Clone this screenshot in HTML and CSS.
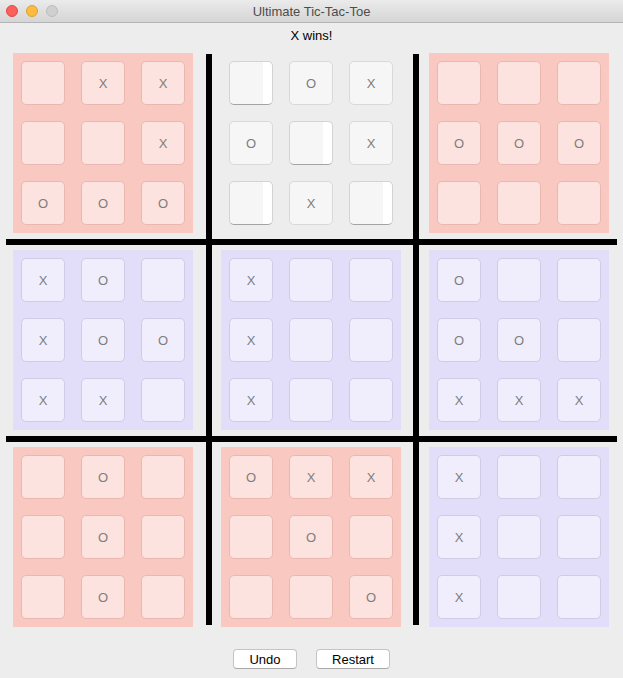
FILE: index.html
```html
<!DOCTYPE html>
<html lang="en">
<head>
    <meta charset="UTF-8">
    <meta name="viewport" content="width=device-width, initial-scale=1.0">
    <title>Ultimate Tic-Tac-Toe</title>
    <link rel="stylesheet" href="styles.css">
</head>
<body>
    <div class="titlebar">
        <div class="lights">
            <span class="light close"></span>
            <span class="light minimize"></span>
            <span class="light zoom"></span>
        </div>
        <div class="title">Ultimate Tic-Tac-Toe</div>
    </div>

    <p class="status">X wins!</p>

    <div class="game">
        <!-- Row 1 -->
        <div class="board red b1">
            <button class="cell"></button><button class="cell">X</button><button class="cell">X</button>
            <button class="cell"></button><button class="cell"></button><button class="cell">X</button>
            <button class="cell">O</button><button class="cell">O</button><button class="cell">O</button>
        </div>
        <div class="board open b2">
            <button class="cell lit"></button><button class="cell">O</button><button class="cell">X</button>
            <button class="cell">O</button><button class="cell lit"></button><button class="cell">X</button>
            <button class="cell lit"></button><button class="cell">X</button><button class="cell lit"></button>
        </div>
        <div class="board red b3">
            <button class="cell"></button><button class="cell"></button><button class="cell"></button>
            <button class="cell">O</button><button class="cell">O</button><button class="cell">O</button>
            <button class="cell"></button><button class="cell"></button><button class="cell"></button>
        </div>

        <!-- Row 2 -->
        <div class="board blue b4">
            <button class="cell">X</button><button class="cell">O</button><button class="cell"></button>
            <button class="cell">X</button><button class="cell">O</button><button class="cell">O</button>
            <button class="cell">X</button><button class="cell">X</button><button class="cell"></button>
        </div>
        <div class="board blue b5">
            <button class="cell">X</button><button class="cell"></button><button class="cell"></button>
            <button class="cell">X</button><button class="cell"></button><button class="cell"></button>
            <button class="cell">X</button><button class="cell"></button><button class="cell"></button>
        </div>
        <div class="board blue b6">
            <button class="cell">O</button><button class="cell"></button><button class="cell"></button>
            <button class="cell">O</button><button class="cell">O</button><button class="cell"></button>
            <button class="cell">X</button><button class="cell">X</button><button class="cell">X</button>
        </div>

        <!-- Row 3 -->
        <div class="board red b7">
            <button class="cell"></button><button class="cell">O</button><button class="cell"></button>
            <button class="cell"></button><button class="cell">O</button><button class="cell"></button>
            <button class="cell"></button><button class="cell">O</button><button class="cell"></button>
        </div>
        <div class="board red b8">
            <button class="cell">O</button><button class="cell">X</button><button class="cell">X</button>
            <button class="cell"></button><button class="cell">O</button><button class="cell"></button>
            <button class="cell"></button><button class="cell"></button><button class="cell">O</button>
        </div>
        <div class="board blue b9">
            <button class="cell">X</button><button class="cell"></button><button class="cell"></button>
            <button class="cell">X</button><button class="cell"></button><button class="cell"></button>
            <button class="cell">X</button><button class="cell"></button><button class="cell"></button>
        </div>

        <!-- Dividers -->
        <div class="vline first"></div>
        <div class="vline second"></div>
        <div class="hline first"></div>
        <div class="hline second"></div>
    </div>

    <div class="controls">
        <button class="action undo">Undo</button>
        <button class="action restart">Restart</button>
    </div>
</body>
</html>
```

FILE: styles.css
```css
body {
    margin: 0;
    width: 623px;
    height: 678px;
    background: #ededed;
    font-family: "Liberation Sans", Arial, sans-serif;
    overflow: hidden;
}
.titlebar {
    position: relative;
    height: 22px;
    background: linear-gradient(#ebebeb, #d5d5d5);
    border-bottom: 1px solid #b4b4b4;
    display: flex;
    align-items: center;
    justify-content: center;
}
.lights {
    position: absolute;
    left: 6px;
    top: 5px;
    display: flex;
    gap: 8px;
}
.light {
    width: 12px;
    height: 12px;
    border-radius: 50%;
    box-sizing: border-box;
}
.close {
    background: #fc605b;
    border: 1px solid #de4a45;
}
.minimize {
    background: #fdbc40;
    border: 1px solid #dea031;
}
.zoom {
    background: #cfcfcf;
    border: 1px solid #bdbdbd;
}
.title {
    font-size: 13px;
    color: #4d4d4d;
}
.status {
    margin: 0;
    height: 30px;
    line-height: 26px;
    text-align: center;
    font-size: 13px;
    color: #000;
}
.game {
    display: grid;
    grid-template-columns: 180px 28px 180px 28px 180px;
    grid-template-rows: 180px 17px 180px 17px 180px;
    margin-left: 13px;
    width: 596px;
}
.board {
    display: grid;
    grid-template-columns: repeat(3, 44px);
    grid-template-rows: repeat(3, 44px);
    gap: 16px;
    padding: 8px;
}
.b1 { grid-area: 1 / 1; }
.b2 { grid-area: 1 / 3; }
.b3 { grid-area: 1 / 5; }
.b4 { grid-area: 3 / 1; }
.b5 { grid-area: 3 / 3; }
.b6 { grid-area: 3 / 5; }
.b7 { grid-area: 5 / 1; }
.b8 { grid-area: 5 / 3; }
.b9 { grid-area: 5 / 5; }
.red {
    background: #f9c8c0;
}
.blue {
    background: #e2ddf8;
}
.cell {
    box-sizing: border-box;
    width: 44px;
    height: 44px;
    padding: 0;
    border-radius: 5px;
    font-family: "Liberation Sans", Arial, sans-serif;
    font-size: 13px;
    color: #7d7d7d;
}
.red .cell {
    background: #fde3df;
    border: 1px solid #ebb8b1;
}
.blue .cell {
    background: #f0eefd;
    border: 1px solid #d1cbe6;
}
.open .cell {
    background: #f6f6f6;
    border: 1px solid #d9d9d9;
}
.open .cell.lit {
    background: linear-gradient(to right, #f6f6f6 33px, #ffffff 33px);
    border-color: #d3d3d3;
    border-bottom-color: #a3a3a3;
}
.vline {
    grid-row: 1 / 6;
    width: 6px;
    background: #000;
    margin-top: 1px;
    margin-bottom: 2px;
}
.vline.first {
    grid-column: 2;
    margin-left: 13px;
}
.vline.second {
    grid-column: 4;
    margin-left: 12px;
}
.hline {
    grid-column: 1 / 6;
    height: 6px;
    background: #000;
    margin-top: 6px;
    margin-left: -7px;
    margin-right: -8px;
}
.hline.first {
    grid-row: 2;
}
.hline.second {
    grid-row: 4;
}
.controls {
    display: flex;
    justify-content: center;
    gap: 19px;
    margin-top: 22px;
}
.action {
    box-sizing: border-box;
    height: 20px;
    padding: 0;
    background: #fff;
    border: 1px solid #c4c4c4;
    border-bottom-color: #a9a9a9;
    border-radius: 4px;
    font-family: "Liberation Sans", Arial, sans-serif;
    font-size: 13px;
    color: #000;
}
.undo {
    width: 64px;
}
.restart {
    width: 74px;
}
```
